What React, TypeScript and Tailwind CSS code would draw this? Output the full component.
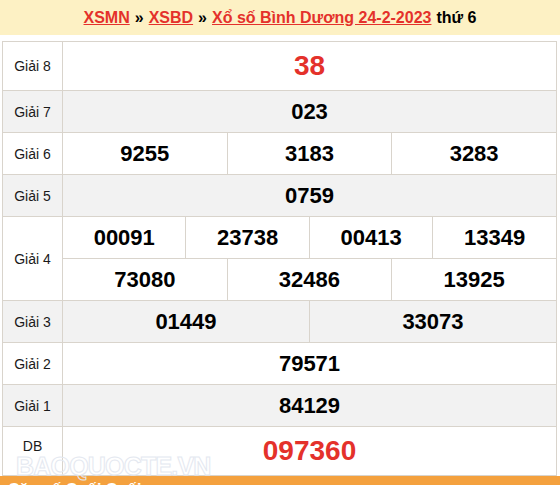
import React from "react";

const F = { fontFamily: '"Liberation Sans", Arial, sans-serif' };

type Row = {
  label: string;
  cells: string[][];
  alt: boolean;
  red?: boolean;
  big?: boolean;
};

const rows: Row[] = [
  { label: "Giải 8", cells: [["38"]], alt: false, red: true },
  { label: "Giải 7", cells: [["023"]], alt: true },
  { label: "Giải 6", cells: [["9255", "3183", "3283"]], alt: false },
  { label: "Giải 5", cells: [["0759"]], alt: true },
  {
    label: "Giải 4",
    cells: [
      ["00091", "23738", "00413", "13349"],
      ["73080", "32486", "13925"],
    ],
    alt: false,
  },
  { label: "Giải 3", cells: [["01449", "33073"]], alt: true },
  { label: "Giải 2", cells: [["79571"]], alt: false },
  { label: "Giải 1", cells: [["84129"]], alt: true },
  { label: "DB", cells: [["097360"]], alt: false, red: true, big: true },
];

const B = "border border-[#d9d4cc]";

export default function App() {
  return (
    <div className="relative w-[560px] h-[485px] overflow-hidden bg-white" style={F}>
      <div className="h-[35px] bg-[#fdf1c4] flex items-center justify-center text-[16px] font-bold text-black">
        <a className="text-[#e4312b] underline">XSMN</a>
        <span className="mx-[5px]">»</span>
        <a className="text-[#e4312b] underline">XSBD</a>
        <span className="mx-[5px]">»</span>
        <a className="text-[#e4312b] underline">Xổ số Bình Dương 24-2-2023</a>
        <span className="ml-[5px]">thứ 6</span>
      </div>
      <table className="mt-[6px] ml-[2px] w-[555px] table-fixed border-collapse">
        <colgroup>
          <col className="w-[60px]" />
          {Array.from({ length: 12 }).map((_, i) => (
            <col key={i} />
          ))}
        </colgroup>
        <tbody>
          {rows.map((r) =>
            r.cells.map((line, li) => {
              const span = 12 / line.length;
              const h = r.label === "Giải 8" ? "h-[49px]" : r.big ? "h-[49px]" : "h-[42px]";
              return (
                <tr key={r.label + li} className={r.alt ? "bg-[#f2f2f2]" : "bg-white"}>
                  {li === 0 && (
                    <td
                      rowSpan={r.cells.length}
                      className={`${B} text-center align-middle text-[14px] leading-[20px] text-[#1a1a1a] ${r.big ? "pb-[10px]" : ""}`}
                    >
                      {r.label}
                    </td>
                  )}
                  {line.map((n) => (
                    <td
                      key={n}
                      colSpan={span}
                      className={`${B} ${h} text-center align-middle font-bold leading-[32px] ${
                        r.red ? "text-[#e4312b] text-[28px]" : "text-black text-[22px]"
                      }`}
                    >
                      {n}
                    </td>
                  ))}
                </tr>
              );
            })
          )}
        </tbody>
      </table>
      <div
        className="pointer-events-none absolute left-[16px] top-[448px] text-[25px] font-bold tracking-[-0.8px] text-transparent [-webkit-text-stroke:1px_#e4e8f0]"
      >
        BAOQUOCTE.VN
      </div>
      <div className="h-[30px] bg-[#f4a13e] px-[8px] pt-[2px] text-[16px] font-bold text-white">
        Cặp số Cuối Cuối
      </div>
    </div>
  );
}
